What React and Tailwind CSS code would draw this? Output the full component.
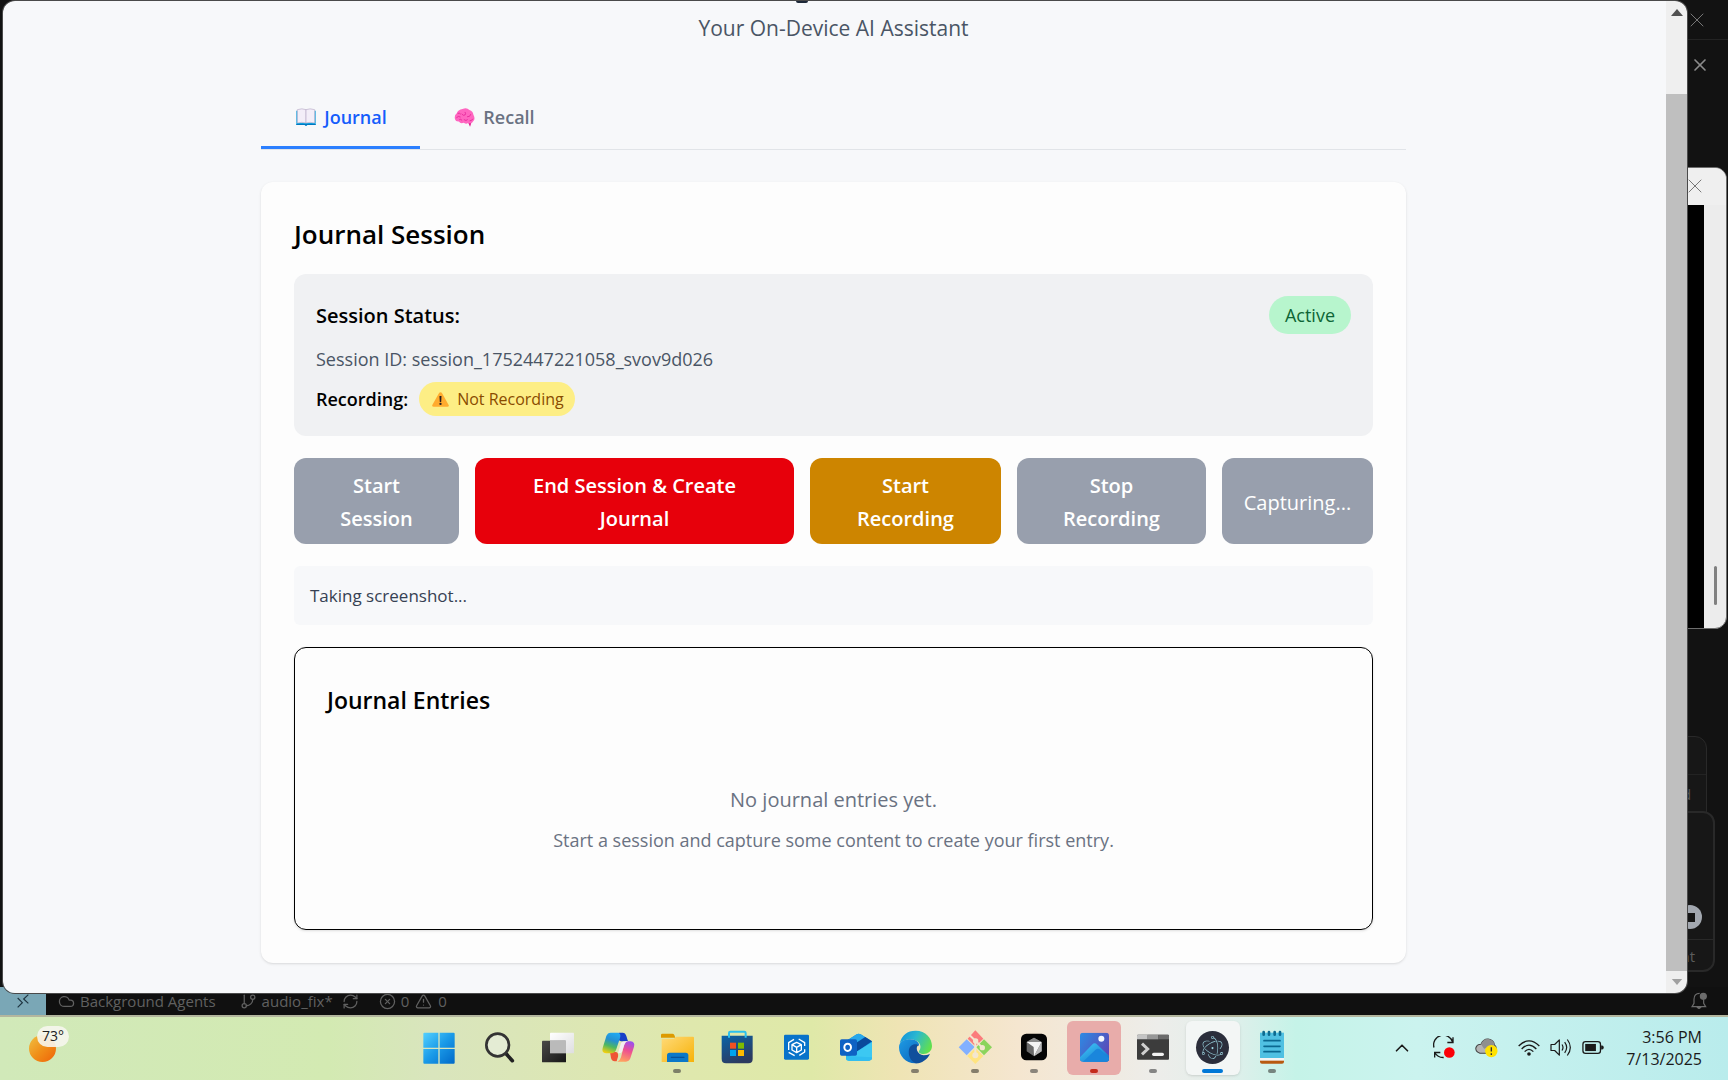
import { ChevronUp, Cloud, GitBranch, RefreshCw, CircleX, TriangleAlert, X } from "lucide-react";
import { SiElectron } from "react-icons/si";

const BookIcon = () => (
  <svg viewBox="0 0 60 54" className="h-[18px] w-5" aria-hidden="true">
    <path d="M1 8 h5 v40 H1z M54 8h5v40h-5z M1 44h58v7H34q-4 5-8 0H1z" fill="#0aa0e0" />
    <path d="M1 48h58v3H34q-4 4-8 0H1z" fill="#0078c0" />
    <path d="M4 5 Q18 0 30 5 V45 Q18 41 4 45Z" fill="#f3eef8" stroke="#b9aec8" strokeWidth="2" />
    <path d="M56 5 Q42 0 30 5 V45 Q42 41 56 45Z" fill="#f3eef8" stroke="#b9aec8" strokeWidth="2" />
  </svg>
);

const BrainIcon = () => (
  <svg viewBox="0 0 62 58" className="h-[19px] w-[21px]" aria-hidden="true">
    <path d="M42 44 L48 57 L52 44Z" fill="#e01890" />
    <path d="M2 34 Q-1 22 7 17 Q11 5 25 3 Q38 -2 46 6 Q57 9 58 20 Q65 34 58 40 Q54 50 42 46 Q36 51 29 45 Q18 49 14 41 Q4 42 2 34Z" fill="#ff66c0" />
    <path d="M7 29q5-6 11-2 M16 35q4-3 7 2 M23 19q4 6 10 2 q3-5 0-8 M30 36q6 5 10 0 M40 27q8 1 10-7 M48 39q6 0 8-5 M11 16q5-2 8 2" fill="none" stroke="#e5279a" strokeWidth="2.6" strokeLinecap="round" />
  </svg>
);

const WarningIcon = () => (
  <svg viewBox="0 0 50 44" className="h-[15px] w-[17px] shrink-0" aria-hidden="true">
    <path d="M25 1 Q28 1 30 4 L49 38 Q51 43 45 43 H5 Q-1 43 1 38 L20 4 Q22 1 25 1Z" fill="#ffab2e" />
    <path d="M22 12h6l-1 17h-4z" fill="#2a2020" />
    <circle cx="25" cy="35" r="3.4" fill="#2a2020" />
  </svg>
);

const Glyph = ({ children }) => (
  <svg viewBox="0 0 96 96" className="size-8 overflow-visible" aria-hidden="true">{children}</svg>
);

const WindowsLogo = () => (
  <Glyph>
    <defs>
      <linearGradient id="win" x1="0" y1="0" x2="96" y2="96" gradientUnits="userSpaceOnUse">
        <stop offset="0" stopColor="#55d2ff" />
        <stop offset=".5" stopColor="#1a9ae8" />
        <stop offset="1" stopColor="#0068c8" />
      </linearGradient>
    </defs>
    <path fill="url(#win)" d="M4 2h42v45H1V5q0-3 3-3z M50 2h42q3 0 3 3v42H50z M1 51h45v44H4q-3 0-3-3z M50 51h45v41q0 3-3 3H50z" />
  </Glyph>
);

const SearchLogo = () => (
  <Glyph>
    <path d="M68 64 L88 86" stroke="#222" strokeWidth="11" strokeLinecap="round" />
    <circle cx="44" cy="39" r="34" fill="#e4ecd4" stroke="#333" strokeWidth="8" />
  </Glyph>
);

const TaskViewLogo = () => (
  <Glyph>
    <defs>
      <linearGradient id="tv" x1="0" y1="0" x2="1" y2="1">
        <stop offset="0" stopColor="#4a4a48" />
        <stop offset="1" stopColor="#161616" />
      </linearGradient>
      <linearGradient id="tv2" x1="0" y1="0" x2="1" y2="1">
        <stop offset="0" stopColor="#fff" />
        <stop offset="1" stopColor="#dedee0" />
      </linearGradient>
    </defs>
    <rect x="24" y="2" width="72" height="62" rx="2" fill="url(#tv2)" />
    <rect x="0" y="26" width="72" height="65" rx="2" fill="url(#tv)" />
    <rect x="24" y="26" width="48" height="38" fill="#bababa" />
  </Glyph>
);

const CopilotLogo = () => (
  <Glyph>
    <defs>
      <linearGradient id="cpa" x1=".6" y1="0" x2=".3" y2="1">
        <stop offset="0" stopColor="#20a8f0" />
        <stop offset=".35" stopColor="#2590d0" />
        <stop offset=".65" stopColor="#4db860" />
        <stop offset="1" stopColor="#f2cf10" />
      </linearGradient>
      <linearGradient id="cpb" x1=".7" y1="0" x2=".4" y2="1">
        <stop offset="0" stopColor="#9a50f0" />
        <stop offset=".45" stopColor="#ee5090" />
        <stop offset="1" stopColor="#ffa060" />
      </linearGradient>
    </defs>
    <path d="M50 2h12q8 0 11 10l5 16H58q-8 0-8-10z" fill="#1740c8" />
    <path d="M24 60 H42 Q50 62 48 74 L44 88 H38 Q30 88 27 78Z" fill="#ef5535" />
    <path d="M26 2 H48 Q58 4 54 18 L42 54 Q38 64 28 64 H12 Q-2 62 2 48 L13 12 Q17 2 26 2Z" fill="url(#cpa)" />
    <path d="M72 89 H46 Q54 86 57 76 L66 40 Q70 28 78 28 H86 Q100 30 96 44 L85 79 Q81 89 72 89Z" fill="url(#cpb)" />
    <path d="M48 64 L57 33 Q60 27 78 27 Q70 29 67 38 L60 60 Q58 64 48 64Z" fill="#f3eef0" />
  </Glyph>
);

const ExplorerLogo = () => (
  <Glyph>
    <defs>
      <linearGradient id="fx" x1="0" y1="0" x2="1" y2="1">
        <stop offset="0" stopColor="#ffda78" />
        <stop offset="1" stopColor="#f7b208" />
      </linearGradient>
    </defs>
    <path d="M4 5h30q4 0 6 4l3 8H0V9q0-4 4-4z" fill="#dd9a00" />
    <path d="M2 20h36l8-6h50q3 0 3 3v73H2z" fill="url(#fx)" />
    <path d="M18 90V70q0-8 8-8h48q8 0 8 8v20z" fill="#0b78c8" />
    <path d="M31 76h38" stroke="#07529a" strokeWidth="4" strokeLinecap="round" />
  </Glyph>
);

const StoreLogo = () => (
  <Glyph>
    <defs>
      <linearGradient id="st" x1="0" y1="0" x2=".5" y2="1">
        <stop offset="0" stopColor="#0a64a8" />
        <stop offset="1" stopColor="#2c3a60" />
      </linearGradient>
    </defs>
    <path d="M2 11h93v70q0 13-13 13H15q-13 0-13-13z" fill="url(#st)" />
    <path d="M24 17V3q0-4 4-4h42q4 0 4 4v14" fill="none" stroke="#2bc0ee" strokeWidth="6" />
    <path d="M27 32h18v18H27z" fill="#f25022" />
    <path d="M51 32h18v18H51z" fill="#7fba00" />
    <path d="M27 54h18v18H27z" fill="#00a4ef" />
    <path d="M51 54h18v18H51z" fill="#ffb900" />
  </Glyph>
);

const BoxLogo = () => (
  <Glyph>
    <rect x="12" y="8" width="75" height="75" rx="4" fill="#0873ca" />
    <g fill="none" stroke="#fff" strokeWidth="4" strokeLinejoin="round">
      <path d="M50 31 L64 38 V54 L50 62 L36 54 V38Z M36 38 L50 46 L64 38 M50 46 V62" />
      <path d="M26 54V32L42 22 M56 21 L74 32 V42 M74 52 V60 L58 70 M44 71 L26 61" />
    </g>
  </Glyph>
);

const OutlookLogo = () => (
  <Glyph>
    <path d="M18 27 L50 7 Q56 3 62 7 L96 28 V76 Q96 86 86 86 H28 Q18 86 18 76Z" fill="#1590dc" />
    <path d="M20 26 L50 7 Q56 3 62 7 L75 15 L40 38Z" fill="#28a8ea" />
    <path d="M40 38 L76 15 L96 28 L52 58Z" fill="#0a4a9c" />
    <path d="M52 58 L96 30 V76 Q96 86 86 86 H28 Q18 86 18 80Z" fill="#3cc8f2" />
    <path d="M18 72 L96 76 Q96 86 86 86 H28 Q18 86 18 76Z" fill="#30bdf0" />
    <rect x="0" y="22" width="51" height="49" rx="5" fill="#0f62c4" />
    <ellipse cx="23" cy="46" rx="10" ry="11" fill="none" stroke="#fff" strokeWidth="6" />
  </Glyph>
);

const EdgeLogo = () => (
  <Glyph>
    <defs>
      <linearGradient id="eg" x1="0" y1=".2" x2="1" y2=".6">
        <stop offset="0" stopColor="#1292dc" />
        <stop offset=".45" stopColor="#2bb8d0" />
        <stop offset="1" stopColor="#62e04c" />
      </linearGradient>
      <linearGradient id="eg2" x1="0" y1="0" x2="1" y2="1">
        <stop offset="0" stopColor="#1e9be4" />
        <stop offset="1" stopColor="#0a60b8" />
      </linearGradient>
    </defs>
    <path d="M2 34 Q12 -4 50 -4 C80 -4 99 18 99 42 C99 58 86 66 74 66 C62 66 56 60 62 54 C70 42 60 24 36 22 Q14 22 2 34Z" fill="url(#eg)" />
    <path d="M0 46 C0 28 18 20 34 22 C54 23 62 34 60 42 C56 38 42 36 38 50 C34 68 50 84 72 84 C62 92 56 94 48 94 C20 94 0 72 0 46Z" fill="url(#eg2)" />
    <path d="M30 52 C34 34 54 34 58 40 C48 46 54 68 74 70 Q84 70 93 66 C84 84 66 95 50 94 C34 88 27 70 30 52Z" fill="#104f9c" />
  </Glyph>
);

const GitLogo = () => (
  <Glyph>
    <path d="M49 -5 L73 20 L49 43 L26 20Z" fill="#fb7c7c" />
    <path d="M23 22 L47 45 L23 70 L-1 46Z" fill="#82b0ff" />
    <path d="M75 22 L99 46 L75 70 L52 46Z" fill="#8bd45c" />
    <path d="M49 48 L73 72 L49 96 L25 72Z" fill="#ffe480" />
    <path d="M32 10 L49 26 V70 M49 26 L70 47" stroke="#f3e6cf" strokeWidth="6" fill="none" />
    <circle cx="50" cy="27" r="8" fill="#f3e6cf" />
    <circle cx="70" cy="47" r="8" fill="#f3e6cf" />
    <circle cx="49" cy="70" r="9" fill="#f3e6cf" />
  </Glyph>
);

const CursorLogo = () => (
  <Glyph>
    <rect x="9" y="5" width="78" height="80" rx="16" fill="#050505" />
    <path d="M48 17 L71 30 V58 L48 73 L26 58 V30Z" fill="#6a6a6a" />
    <path d="M26 30 L48 17 L71 30Z" fill="#8a8a8a" />
    <path d="M26 30 H71 L48 73 L47 45Z" fill="#f4f4f4" />
    <path d="M71 30 V58 L48 73Z" fill="#b8b8b8" />
  </Glyph>
);

const PhotosLogo = () => (
  <Glyph>
    <defs>
      <linearGradient id="ph" x1="0" y1="0" x2="1" y2=".6">
        <stop offset="0" stopColor="#2d8be4" />
        <stop offset="1" stopColor="#5a4ab8" />
      </linearGradient>
      <linearGradient id="ph2" x1="0" y1="0" x2="1" y2="1">
        <stop offset="0" stopColor="#45cdfa" />
        <stop offset="1" stopColor="#0b6cc8" />
      </linearGradient>
      <clipPath id="phc"><rect x="6" y="2" width="87" height="87" rx="9" /></clipPath>
    </defs>
    <g clipPath="url(#phc)">
      <rect x="6" y="2" width="87" height="87" fill="url(#ph)" />
      <path d="M2 80 L42 38 Q50 30 58 38 L98 76 V92 H2Z" fill="url(#ph2)" />
      <path d="M12 92 L52 54 Q60 47 68 54 L98 84 V92Z" fill="#1a86dc" />
    </g>
    <circle cx="70" cy="20" r="9" fill="#f4f8ff" />
  </Glyph>
);

const TerminalLogo = () => (
  <Glyph>
    <rect x="0" y="8" width="96" height="75" rx="3" fill="#3c3c3c" />
    <path d="M3 8h29v14H0V11q0-3 3-3z" fill="#c4c4c4" />
    <path d="M32 8h32v14H32z" fill="#979797" />
    <path d="M64 8h29q3 0 3 3v11H64z" fill="#6b6b6b" />
    <path d="M15 35 L32 51 L15 67" fill="none" stroke="#cfcfcf" strokeWidth="9" />
    <path d="M50 67h26" stroke="#f2f2f2" strokeWidth="10" strokeLinecap="round" />
  </Glyph>
);

const ElectronLogo = () => (
  <span className="flex size-[33px] items-center justify-center rounded-full bg-[#2b2e3b]">
    <SiElectron className="size-[23px] text-[#9fd8e4]" aria-hidden="true" />
  </span>
);

const NotepadLogo = () => (
  <Glyph>
    <path d="M12 80h72v9q0 6-6 6H18q-6 0-6-6z" fill="#b85a10" />
    <path d="M12 74h72v12H12z" fill="#f4f4f4" />
    <path d="M12 2h72v76H12z" fill="#50c0e2" />
    <path d="M24 26h48M24 43h48M24 59h48" stroke="#0b6890" strokeWidth="5" strokeLinecap="round" />
    <path d="M23 0v8M39 0v8M56 0v8M72 0v8" stroke="#0d6a90" strokeWidth="8" strokeLinecap="round" />
  </Glyph>
);

const apps = [
  { name: "Start", Icon: WindowsLogo },
  { name: "Search", Icon: SearchLogo },
  { name: "Task View", Icon: TaskViewLogo },
  { name: "Copilot", Icon: CopilotLogo },
  { name: "File Explorer", Icon: ExplorerLogo, dot: "w-2 bg-[#7d8068]" },
  { name: "Store", Icon: StoreLogo },
  { name: "Packages", Icon: BoxLogo },
  { name: "Outlook", Icon: OutlookLogo },
  { name: "Edge", Icon: EdgeLogo, dot: "w-2 bg-[#857e6c]" },
  { name: "Git", Icon: GitLogo, dot: "w-2 bg-[#857e6c]" },
  { name: "Cursor", Icon: CursorLogo, dot: "w-2 bg-[#8b857c]" },
  { name: "Photos", Icon: PhotosLogo, dot: "w-2 bg-[#c42b1c]", tile: "bg-[#e8acaa]" },
  { name: "Terminal", Icon: TerminalLogo, dot: "w-2 bg-[#858585]" },
  { name: "Electron", Icon: ElectronLogo, dot: "w-[21px] bg-[#0078d7]", tile: "bg-[#f3f6f5] shadow-sm" },
  { name: "Notepad", Icon: NotepadLogo, dot: "w-2 bg-[#76857f]" },
];

function Taskbar() {
  return (
    <footer className="flex h-[65px] shrink-0 items-center border-t-2 border-[#b3b69e] bg-[linear-gradient(90deg,#d1e9b9_0%,#d3eab2_19%,#d9e5bd_25%,#dfe8ad_40%,#dfe9a8_47%,#efe4b4_52%,#f5e6d0_59%,#ededea_67%,#e2efeb_71%,#c5f3e8_75%,#cbf3ef_82%,#b9ecec_100%)] pb-[2px]">
      <div className="w-[412px] shrink-0 pb-2 pl-[29px]">
        <button type="button" className="relative block h-9 w-10" aria-label="Weather 73 degrees">
          <span className="absolute bottom-0 left-0 size-[27px] rounded-full bg-linear-to-br from-[#eec040] via-[#f09018] to-[#ee6008]" />
          <span className="absolute top-0 left-2 flex h-[21px] w-8 items-center justify-center rounded-full bg-[#f6f6ee]/90 text-sm text-[#222]">73°</span>
        </button>
      </div>
      <nav aria-label="Taskbar" className="flex w-[887px] shrink-0 justify-between">
        {apps.map(({ name, Icon, dot, tile }) => (
          <button key={name} type="button" aria-label={name} className={`relative flex h-[54px] w-[54px] items-center justify-center rounded-md ${tile || ""}`}>
            <Icon />
            {dot && <span className={`absolute bottom-[2px] h-1 rounded-full ${dot}`} />}
          </button>
        ))}
      </nav>
      <div className="flex flex-1 items-center justify-end pr-[26px] text-[#1a1a1a]">
        <ChevronUp size={22} strokeWidth={1.8} className="mr-5" />
        <svg viewBox="0 0 66 68" className="mr-5 h-[23px] w-[22px] shrink-0" aria-label="Sync">
          <path d="M3 34 A28 28 0 0 1 59 18 M60 3 V19 H43 M5 64 V49 H22 M5 49 A30 30 0 0 0 32 64" fill="none" stroke="#1a1a1a" strokeWidth="4" />
          <circle cx="49" cy="49" r="16" fill="#fb0007" />
        </svg>
        <svg viewBox="0 0 66 58" className="mr-5 h-5 w-[23px] shrink-0" aria-label="Cloud storage">
          <path d="M14 44 Q1 40 2 29 Q5 18 17 18 Q24 2 38 3 Q54 5 56 20 Q64 26 60 40 L50 44Z" fill="#b4b4b4" stroke="#444" strokeWidth="3" />
          <path d="M17 18 Q24 2 38 3 Q54 5 56 20 L26 31Z" fill="#8f8f8f" />
          <circle cx="47" cy="38" r="18" fill="#ffe100" />
          <path d="M47 27v12M47 44v5" stroke="#333" strokeWidth="4" />
        </svg>
        <svg viewBox="0 0 66 48" className="mr-[10px] h-4 w-[22px] shrink-0" aria-label="Wi-Fi">
          <path d="M2 18 Q33 -13 64 18 M11 27 Q33 4 55 27 M20 35 Q33 21 46 35" fill="none" stroke="#1a1a1a" strokeWidth="4" />
          <circle cx="33" cy="42" r="5.5" fill="#1a1a1a" />
        </svg>
        <svg viewBox="0 0 66 56" className="mr-[10px] h-[19px] w-[22px] shrink-0" aria-label="Volume">
          <path d="M3 19h11L28 5v46L14 37H3z M36 19q6 9 0 18 M44 12q12 16 0 32 M52 4q18 24 0 48" fill="none" stroke="#1a1a1a" strokeWidth="3.6" strokeLinejoin="round" />
        </svg>
        <svg viewBox="0 0 66 40" className="mr-[22px] h-[13px] w-[22px] shrink-0" aria-label="Battery">
          <rect x="2" y="2" width="54" height="36" rx="8" fill="none" stroke="#1a1a1a" strokeWidth="4" />
          <rect x="9" y="9" width="33" height="22" fill="#1a1a1a" />
          <path d="M58 14 h3 q5 0 5 6 t-5 6 h-3z" fill="#1a1a1a" />
        </svg>
        <time className="text-right text-[16px] leading-[22px] whitespace-nowrap">
          3:56 PM
          <br />
          7/13/2025
        </time>
      </div>
    </footer>
  );
}

function StatusBar() {
  return (
    <div className="flex h-7 shrink-0 items-center bg-[#101010] text-[15px] text-[#606060]">
      <span className="flex h-full w-[46px] items-center justify-center bg-[#7aa7b6]">
        <svg viewBox="0 0 36 42" className="h-[14px] w-3" fill="none" stroke="#1e3440" strokeWidth="3.5" aria-hidden="true">
          <path d="M2 12 L16 26 L2 40 M34 2 L20 15 L34 28" />
        </svg>
      </span>
      <Cloud size={17} strokeWidth={1.8} className="ml-3" />
      <span className="ml-[5px]">Background Agents</span>
      <GitBranch size={17} strokeWidth={1.8} className="ml-6" />
      <span className="ml-[5px]">audio_fix*</span>
      <RefreshCw size={17} strokeWidth={1.8} className="ml-[9px]" />
      <CircleX size={17} strokeWidth={1.8} className="ml-5" />
      <span className="ml-[5px]">0</span>
      <TriangleAlert size={17} strokeWidth={1.8} className="ml-[6px]" />
      <span className="ml-[6px]">0</span>
      <svg viewBox="0 0 48 54" className="mr-[21px] ml-auto h-[18px] w-4" fill="none" stroke="#6c6c6c" strokeWidth="3.5" aria-hidden="true">
        <path d="M26 4 Q9 4 9 22 V34 L3 44 H44 L38 34 V24" />
        <path d="M18 45 q6 9 12 0z" fill="#6c6c6c" />
        <circle cx="37" cy="13" r="9" fill="#6c6c6c" />
      </svg>
    </div>
  );
}

/* Windows that lie behind the main one and show at its right edge */
function BackgroundWindows() {
  return (
    <>
      <div className="absolute top-0 right-0 h-10 w-20 border-b border-[#232323]">
        <X size={24} strokeWidth={1} className="absolute top-2 right-[19px] text-[#777]" />
      </div>
      <X size={20} strokeWidth={2} className="absolute top-[55px] right-[18px] text-[#8b8b8b]" />
      <div className="absolute top-[736px] right-[21px] h-[100px] w-20 rounded-xl border border-[#292929] bg-[#171717]">
        <div className="mt-[37px] border-t border-[#232323]" />
        <span className="absolute top-[46px] left-[54px] text-[15px] text-[#555]">d</span>
      </div>
      <div className="absolute top-[811px] right-[13px] h-[161px] w-20 rounded-xl border-2 border-[#292929] bg-[#171717]">
        <span className="absolute top-[92px] left-[41px] flex size-6 items-center justify-center rounded-full bg-[#a3a8b0]">
          <span className="size-[9px] bg-[#161616]" />
        </span>
        <div className="absolute inset-x-0 bottom-0 h-[31px] border-t border-[#292929] pr-[18px] text-right text-[15px] leading-[32px] text-[#5c5c5c]">nt</div>
      </div>
      <div className="absolute top-[167px] right-px flex h-[462px] w-20 flex-col overflow-hidden rounded-xl border border-[#6d6d6d] bg-[#ececec]">
        <div className="h-[37px] shrink-0 bg-[#efefef]">
          <X size={24} strokeWidth={1} className="mt-[6px] ml-[35px] text-[#777]" />
        </div>
        <div className="relative mr-[22px] flex-1 bg-black">
          <span className="absolute -right-[13px] bottom-[23px] h-[39px] w-[3px] rounded-full bg-[#808080]" />
        </div>
      </div>
    </>
  );
}

const actions = [
  { label: "Start Session", style: "bg-[#989fad] font-semibold px-8", disabled: true },
  { label: "End Session & Create Journal", style: "bg-[#e7000b] font-semibold px-10" },
  { label: "Start Recording", style: "bg-[#cd8500] font-semibold px-9" },
  { label: "Stop Recording", style: "bg-[#989fad] font-semibold px-9", disabled: true },
  { label: "Capturing...", style: "bg-[#989fad] px-2", disabled: true },
];

function JournalPage() {
  return (
    <main className="relative min-w-0 flex-1 overflow-hidden bg-[#f7f8fa] pt-[11px] pr-[2px]">
      <span className="absolute top-0 left-[793px] h-[2px] w-3 rounded-b-full bg-[#1e2939]" />
      <div className="mx-auto max-w-[1145px]">
        <p className="text-center text-[21px] leading-8 text-[#4a5565]">Your On-Device AI Assistant</p>
        <nav className="mt-11 flex h-[62px] border-b border-[#e1e4e8] text-lg font-semibold">
          <button type="button" className="flex w-[159px] items-center justify-center gap-2 border-b-[3px] border-[#2b7fff] pl-[2px] text-[#155dfc]">
            <BookIcon />
            Journal
          </button>
          <button type="button" className="flex w-[149px] items-center justify-center gap-2 border-b-[3px] border-transparent text-[#6a7282]">
            <BrainIcon />
            Recall
          </button>
        </nav>
        <section className="mt-8 rounded-xl bg-[#fdfdfd] p-[33px] shadow-sm">
          <h1 className="text-[26px] leading-[38px] font-semibold text-black">Journal Session</h1>
          <div className="mt-[21px] rounded-xl bg-[#f0f1f3] px-[22px] pt-[22px] pb-5">
            <div className="flex items-start justify-between">
              <h2 className="text-[20px] leading-10 font-semibold text-black">Session Status:</h2>
              <span className="rounded-full bg-[#b7f5cd] px-4 text-[18px] leading-[38px] text-[#0d6535]">Active</span>
            </div>
            <p className="text-[18px] leading-[46px] text-[#4a5565]">Session ID: session_1752447221058_svov9d026</p>
            <div className="flex items-center gap-[11px]">
              <span className="text-[18px] font-semibold text-black">Recording:</span>
              <span className="flex h-[34px] items-center gap-2 rounded-full bg-[#fdee85] pr-[11px] pl-[13px] text-[16px] text-[#894b00]">
                <WarningIcon />
                Not Recording
              </span>
            </div>
          </div>
          <div className="mt-[22px] grid grid-cols-[165fr_319fr_191fr_189fr_151fr] gap-4 text-[20px] leading-[33px] text-white">
            {actions.map(({ label, style, disabled }) => (
              <button key={label} type="button" disabled={disabled} className={`rounded-xl pt-[11px] pb-[9px] ${style}`}>
                {label}
              </button>
            ))}
          </div>
          <p className="mt-[22px] rounded-md bg-[#f7f8fa] p-4 text-[17px] leading-[27px] text-[#364153]">Taking screenshot...</p>
          <section className="mt-[22px] rounded-xl border border-black p-8 shadow-sm">
            <h2 className="text-[23px] leading-10 font-semibold text-black">Journal Entries</h2>
            <div className="pt-[60px] pb-[37px] text-center text-[#6a7282]">
              <p className="text-[20px] leading-10">No journal entries yet.</p>
              <p className="text-[18px] leading-10">Start a session and capture some content to create your first entry.</p>
            </div>
          </section>
        </section>
      </div>
    </main>
  );
}

export default function App() {
  return (
    <div className="flex h-screen flex-col overflow-hidden bg-[#121212] font-['Open_Sans','Noto_Sans',sans-serif]">
      <div className="relative flex min-h-0 flex-1 flex-col">
        <div className="flex-1" />
        <StatusBar />
        <BackgroundWindows />
        <div className="absolute top-px right-[41px] bottom-[22px] left-[3px] flex overflow-hidden rounded-xl shadow-[0_0_0_1px_#4a4a4a]">
          <JournalPage />
          <div className="flex w-[21px] shrink-0 flex-col items-center bg-[#efefef]">
            <svg viewBox="0 0 12 7" className="mt-2 h-[7px] w-3 shrink-0" aria-hidden="true"><path d="M6 0 L12 7 H0Z" fill="#505050" /></svg>
            <div className="mt-[78px] w-full flex-1 bg-[#bfbfbf]" />
            <svg viewBox="0 0 12 7" className="my-2 h-[6px] w-3 shrink-0" aria-hidden="true"><path d="M0 0 H12 L6 7Z" fill="#a0a0a0" /></svg>
          </div>
        </div>
      </div>
      <Taskbar />
    </div>
  );
}
